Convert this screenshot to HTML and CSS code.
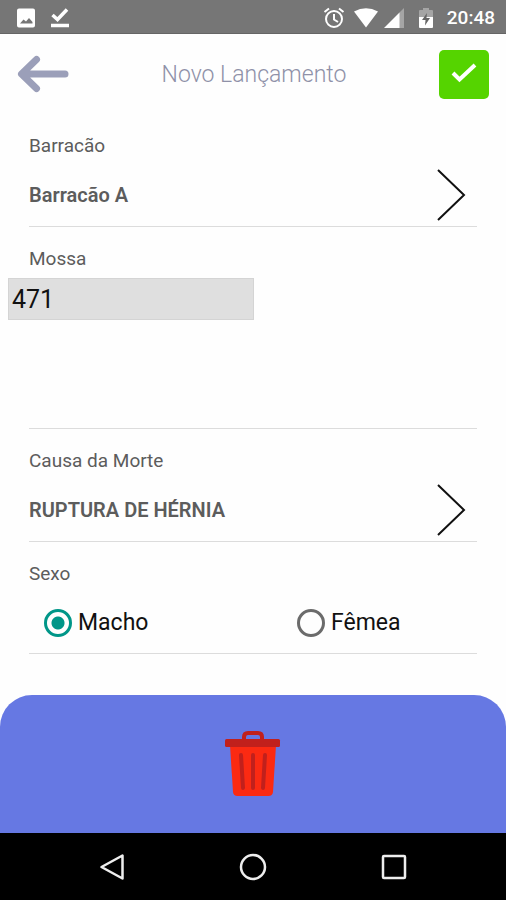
FILE: index.html
```html
<!DOCTYPE html>
<html lang="pt-BR">
<head>
<meta charset="utf-8">
<meta name="viewport" content="width=device-width, initial-scale=1">
<title>Novo Lançamento</title>
<link rel="stylesheet" href="styles.css">
</head>
<body>
<div class="status">
  <svg width="20" height="20" viewBox="0 0 20 20" aria-hidden="true"><path fill="#fff" fill-rule="evenodd" d="M3 .5h14a2 2 0 0 1 2 2v15a2 2 0 0 1-2 2H3a2 2 0 0 1-2-2v-15a2 2 0 0 1 2-2zM4 15.500h12.500v-1.500l-3.500-4-3 3.500-2.500-2z"/></svg>
  <svg class="done" width="20" height="20" viewBox="0 0 20 20" aria-hidden="true"><path d="M2.500 7l5 4.500L17 1.500M1 17.500h18" fill="none" stroke="#fff" stroke-width="3.500"/></svg>
  <span class="spacer"></span>
  <svg width="22" height="22" viewBox="0 0 22 22" aria-hidden="true"><g fill="none" stroke="#fff" stroke-width="2"><circle cx="11" cy="12" r="8"/><path d="M1.500 5L6 1.500M20.500 5L16 1.500M11 7v5.500l4 2.500"/></g></svg>
  <svg class="wifi" width="24" height="20" viewBox="0 0 24 20" aria-hidden="true"><path fill="#fff" d="M0 3.500Q12-3 24 3.500L12 19.500z"/></svg>
  <svg class="signal" width="20" height="20" viewBox="0 0 20 20" aria-hidden="true"><path fill="#a5a5a5" d="M15 5l5-5v20h-5z"/><path fill="#fff" d="M0 20L15.500 4.500V20z"/></svg>
  <svg class="battery" width="14" height="20" viewBox="0 0 14 20" aria-hidden="true"><path fill="#a5a5a5" d="M0 3q0-1 1-1h3V0h6v2h3q1 0 1 1v7H0z"/><path fill="#fff" d="M0 9h14v10q0 1-1 1H1q-1 0-1-1z"/><path fill="#666" d="M8 5l-5 7h3.500L6 17.500l5-7.500H7.500z"/></svg>
  <time>20:48</time>
</div>

<header class="topbar">
  <button class="back" type="button" aria-label="Voltar">
    <svg width="52" height="40" viewBox="0 0 52 40" aria-hidden="true"><path d="M19.500 5.500L4.500 20l15 14.500M6 20h42" fill="none" stroke="#9b9fb9" stroke-width="7" stroke-linecap="round" stroke-linejoin="round"/></svg>
  </button>
  <h1>Novo Lançamento</h1>
  <button class="save" type="submit" form="entry" aria-label="Salvar">
    <svg width="28" height="22" viewBox="0 0 28 22" aria-hidden="true"><path d="M3 10l6.500 6.500L25 2" fill="none" stroke="#fff" stroke-width="4"/></svg>
  </button>
</header>

<form class="entry" id="entry">
  <section class="field">
    <h2 id="shed">Barracão</h2>
    <button class="row picker" type="button" aria-describedby="shed">
      <span>Barracão A</span>
      <svg width="30" height="54" viewBox="0 0 30 54" aria-hidden="true"><path d="M2 2l26 25L2 52" fill="none" stroke="#111" stroke-width="2"/></svg>
    </button>
  </section>
  <section class="field notch">
    <label for="mossa">Mossa</label>
    <input id="mossa" type="text" inputmode="numeric" value="471">
  </section>
  <section class="field">
    <h2 id="cause">Causa da Morte</h2>
    <button class="row picker" type="button" aria-describedby="cause">
      <span>RUPTURA DE HÉRNIA</span>
      <svg width="30" height="54" viewBox="0 0 30 54" aria-hidden="true"><path d="M2 2l26 25L2 52" fill="none" stroke="#111" stroke-width="2"/></svg>
    </button>
  </section>
  <section class="field" role="radiogroup" aria-labelledby="sex">
    <h2 id="sex">Sexo</h2>
    <div class="row options">
      <label><input type="radio" name="sexo" value="macho" checked>Macho</label>
      <label><input type="radio" name="sexo" value="femea">Fêmea</label>
    </div>
  </section>
</form>

<footer class="actions">
  <button type="button" aria-label="Excluir">
    <svg width="56" height="66" viewBox="0 0 56 66" aria-hidden="true"><path d="M19 9V6q0-4 4-4h10q4 0 4 4v3" fill="none" stroke="#c1201c" stroke-width="4"/><path fill="#fb2a12" d="M5 14h46l-3 47q-.5 4-4.500 4h-31q-4 0-4.500-4z"/><rect x="0" y="8" width="55" height="8" rx="1.500" fill="#c1201c"/><path d="M16 24l2 33M28 24v33M40 24l-2 33" fill="none" stroke="#c1201c" stroke-width="4" stroke-linecap="round"/></svg>
  </button>
</footer>

<nav class="system">
  <button type="button" aria-label="Retornar"><svg width="28" height="28" viewBox="0 0 28 28" aria-hidden="true"><path d="M24.500 2.500v23L3.500 14z" fill="none" stroke="#eee" stroke-width="2.500" stroke-linejoin="round"/></svg></button>
  <button type="button" aria-label="Início"><svg width="28" height="28" viewBox="0 0 28 28" aria-hidden="true"><circle cx="14" cy="14" r="12" fill="none" stroke="#eee" stroke-width="2.500"/></svg></button>
  <button type="button" aria-label="Recentes"><svg width="28" height="28" viewBox="0 0 28 28" aria-hidden="true"><rect x="3" y="3" width="22" height="22" rx="1" fill="none" stroke="#eee" stroke-width="2.500"/></svg></button>
</nav>
</body>
</html>
```
FILE: styles.css
```css
* { box-sizing: border-box; }

body {
  margin: 0;
  min-height: 100vh;
  display: flex;
  flex-direction: column;
  background: #fefefe;
  color: #5c5c5c;
  font: 20px/24px Roboto, "Liberation Sans", sans-serif;
}

button {
  padding: 0;
  border: 0;
  background: none;
  color: inherit;
  font: inherit;
  cursor: pointer;
}

svg { display: block; flex: none; }

.status {
  display: flex;
  align-items: center;
  height: 34px;
  padding: 2px 11px 0 16px;
  background: #767676;
  border-bottom: 1px solid #656565;
}
.done { margin-left: 14px; }
.spacer { flex: 1; }
.wifi { margin-left: 9px; }
.signal { margin-left: 6px; }
.battery { margin-left: 15px; }
.status time {
  margin-left: 14px;
  color: #fff;
  font-size: 19px;
  font-weight: 500;
}

.topbar {
  display: grid;
  grid-template-columns: 52px 1fr 50px;
  align-items: center;
  height: 80px;
  padding: 0 17px;
}
.topbar h1 {
  margin: 0;
  padding-top: 2px;
  color: #8f91a8;
  font-size: 23px;
  font-weight: 300;
  text-align: center;
}
.save {
  display: grid;
  place-items: center;
  height: 49px;
  border-radius: 5px;
  background: #55d400;
}

.entry { padding: 0 29px; }
.field {
  padding-top: 20px;
  border-bottom: 1px solid #dcdcdc;
}
.field h2,
.notch label {
  display: block;
  margin: 0;
  font-size: 19px;
  font-weight: 400;
}
.row {
  display: flex;
  align-items: center;
  width: 100%;
  height: 68px;
  padding-top: 6px;
}
.picker {
  justify-content: space-between;
  padding-right: 11px;
  font-weight: 600;
}
.notch { min-height: 202px; }
.notch input {
  display: block;
  width: 55%;
  height: 42px;
  margin: 7px 0 0 -21px;
  padding: 0 3px;
  border: 1px solid #d4d4d4;
  border-radius: 0;
  background: #dfdfdf;
  color: #111;
  font: 25px/40px Roboto, "Liberation Sans", sans-serif;
}

.options {
  height: 67px;
  padding-left: 15px;
}
.options label {
  display: flex;
  align-items: center;
  gap: 6px;
  flex: 0 0 253px;
  color: #111;
  font-size: 23px;
}
.options label:last-child { flex: 1; }
.options input {
  appearance: none;
  width: 28px;
  height: 28px;
  margin: 0;
  border: 3px solid #6b6b6b;
  border-radius: 50%;
}
.options input:checked {
  border-color: #009688;
  background: radial-gradient(circle, #009688 6px, transparent 7px);
}

.actions {
  display: grid;
  place-items: center;
  flex: 1;
  min-height: 120px;
  margin-top: 41px;
  border-radius: 32px 32px 0 0;
  background: #6678e3;
}

.system {
  display: flex;
  justify-content: center;
  align-items: center;
  gap: 113px;
  height: 67px;
  background: #000;
}
```
